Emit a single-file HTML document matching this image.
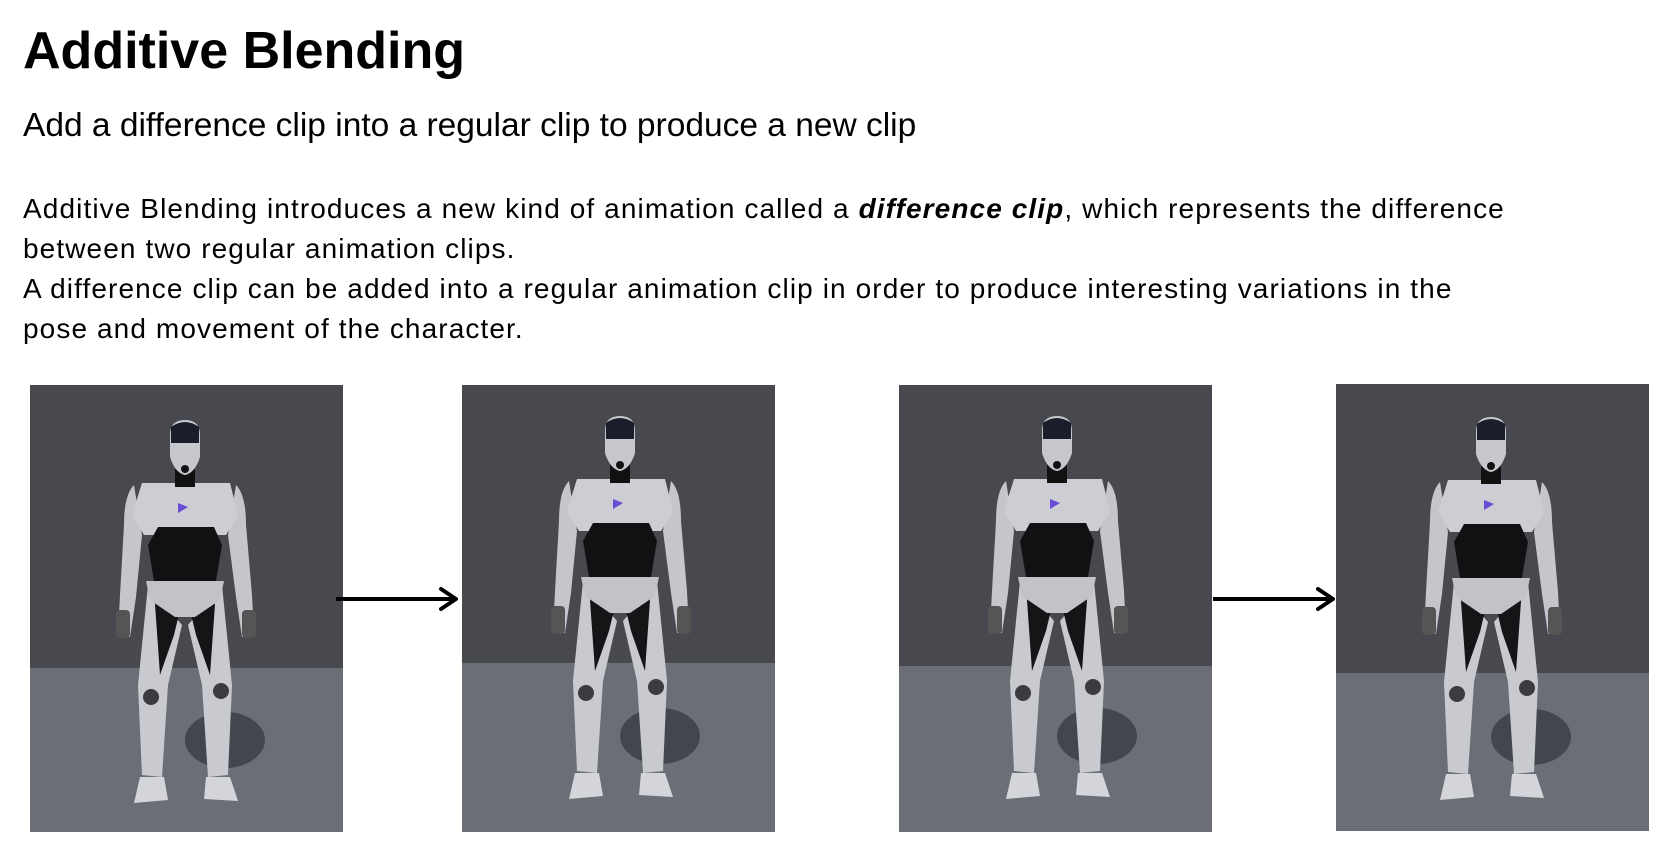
<!DOCTYPE html>
<html><head><meta charset="utf-8"><style>
body{margin:0;width:1672px;height:853px;background:#fff;position:relative;overflow:hidden;font-family:"Liberation Sans",Arial,sans-serif;color:#000}
.t{position:absolute;left:23px;top:21px;font-size:52px;font-weight:bold;white-space:nowrap}
.s{position:absolute;left:23px;top:107px;font-size:33.5px;white-space:nowrap}
.b{position:absolute;left:23px;font-size:28px;white-space:nowrap;letter-spacing:1.1px}
.p{position:absolute;width:313px;height:447px;overflow:hidden}
.p svg{display:block}
.arr{position:absolute;height:4px;background:#000}
</style></head><body>
<div class="t">Additive Blending</div>
<div class="s">Add a difference clip into a regular clip to produce a new clip</div>
<div class="b" style="top:193px">Additive Blending introduces a new kind of animation called a <b><i>difference clip</i></b>, which represents the difference</div>
<div class="b" style="top:233px">between two regular animation clips.</div>
<div class="b" style="top:273px">A difference clip can be added into a regular animation clip in order to produce interesting variations in the</div>
<div class="b" style="top:313px">pose and movement of the character.</div>

<svg width="0" height="0" style="position:absolute">
<defs>
<g id="robot">
<ellipse cx="195" cy="355" rx="40" ry="28" fill="#3a3c44" opacity="0.8"/>
<path d="M104 100 Q94 110 94 140 L90 210 L88 250 L100 252 L106 212 L112 150 Z" fill="#c5c6cc"/>
<path d="M206 100 Q216 110 216 140 L222 210 L224 250 L212 252 L206 212 L198 150 Z" fill="#c5c6cc"/>
<rect x="86" y="225" width="14" height="28" rx="4" fill="#555"/>
<rect x="212" y="225" width="14" height="28" rx="4" fill="#555"/>
<path d="M118 200 L108 300 L112 390 L132 392 L138 300 L152 240 Z" fill="#c9cad0"/>
<path d="M192 200 L202 300 L198 390 L178 392 L172 300 L158 240 Z" fill="#c9cad0"/>
<path d="M124 205 L130 290 L144 250 L150 225 Z" fill="#151518"/>
<path d="M186 205 L180 290 L166 250 L160 225 Z" fill="#151518"/>
<circle cx="121" cy="312" r="8" fill="#3b3c42"/><circle cx="191" cy="306" r="8" fill="#3b3c42"/>
<path d="M110 392 L134 392 L138 415 L104 418 Z" fill="#d4d5da"/>
<path d="M176 392 L200 392 L208 416 L174 414 Z" fill="#d4d5da"/>
<path d="M112 98 L200 98 L208 130 L196 150 L114 150 L102 130 Z" fill="#cdced4"/>
<path d="M128 142 L184 142 L192 160 L186 196 L124 196 L118 160 Z" fill="#111114"/>
<path d="M116 196 L194 196 L190 215 L165 232 L145 232 L120 215 Z" fill="#c2c3c9"/>
<path d="M148 118 l10 4 l-10 6 z" fill="#6a4bd6"/>
<rect x="145" y="84" width="20" height="18" fill="#111"/>
<path d="M140 50 Q140 35 155 35 Q170 35 170 50 L170 72 Q165 88 155 90 Q145 88 140 72 Z" fill="#c7c8ce"/>
<path d="M141 42 Q155 32 169 42 L169 58 L141 58 Z" fill="#1b1e2a"/>
<circle cx="155" cy="84" r="4" fill="#111"/>
</g>
</defs></svg>

<div class="p" style="left:30px;top:385px"><svg width="313" height="447" viewBox="0 0 313 447"><rect width="313" height="447" fill="#48494e"/><rect y="283" width="313" height="164" fill="#6c6e76"/><use href="#robot"/></svg></div>
<div class="p" style="left:462px;top:385px"><svg width="313" height="447" viewBox="0 0 313 447"><rect width="313" height="447" fill="#48494e"/><rect y="278" width="313" height="169" fill="#6c6e76"/><use href="#robot" transform="translate(3,-4)"/></svg></div>
<div class="p" style="left:899px;top:385px"><svg width="313" height="447" viewBox="0 0 313 447"><rect width="313" height="447" fill="#48494e"/><rect y="281" width="313" height="166" fill="#6c6e76"/><use href="#robot" transform="translate(3,-4)"/></svg></div>
<div class="p" style="left:1336px;top:384px"><svg width="313" height="447" viewBox="0 0 313 447"><rect width="313" height="447" fill="#48494e"/><rect y="289" width="313" height="158" fill="#6c6e76"/><use href="#robot" transform="translate(0,-2)"/></svg></div>

<div class="arr" style="left:336px;top:597px;width:118px"></div>
<svg style="position:absolute;left:438px;top:586px" width="22" height="26"><path d="M3 3 L18 13 L3 23" fill="none" stroke="#000" stroke-width="4" stroke-linecap="round" stroke-linejoin="round"/></svg>
<div class="arr" style="left:1213px;top:597px;width:118px"></div>
<svg style="position:absolute;left:1315px;top:586px" width="22" height="26"><path d="M3 3 L18 13 L3 23" fill="none" stroke="#000" stroke-width="4" stroke-linecap="round" stroke-linejoin="round"/></svg>
</body></html>
